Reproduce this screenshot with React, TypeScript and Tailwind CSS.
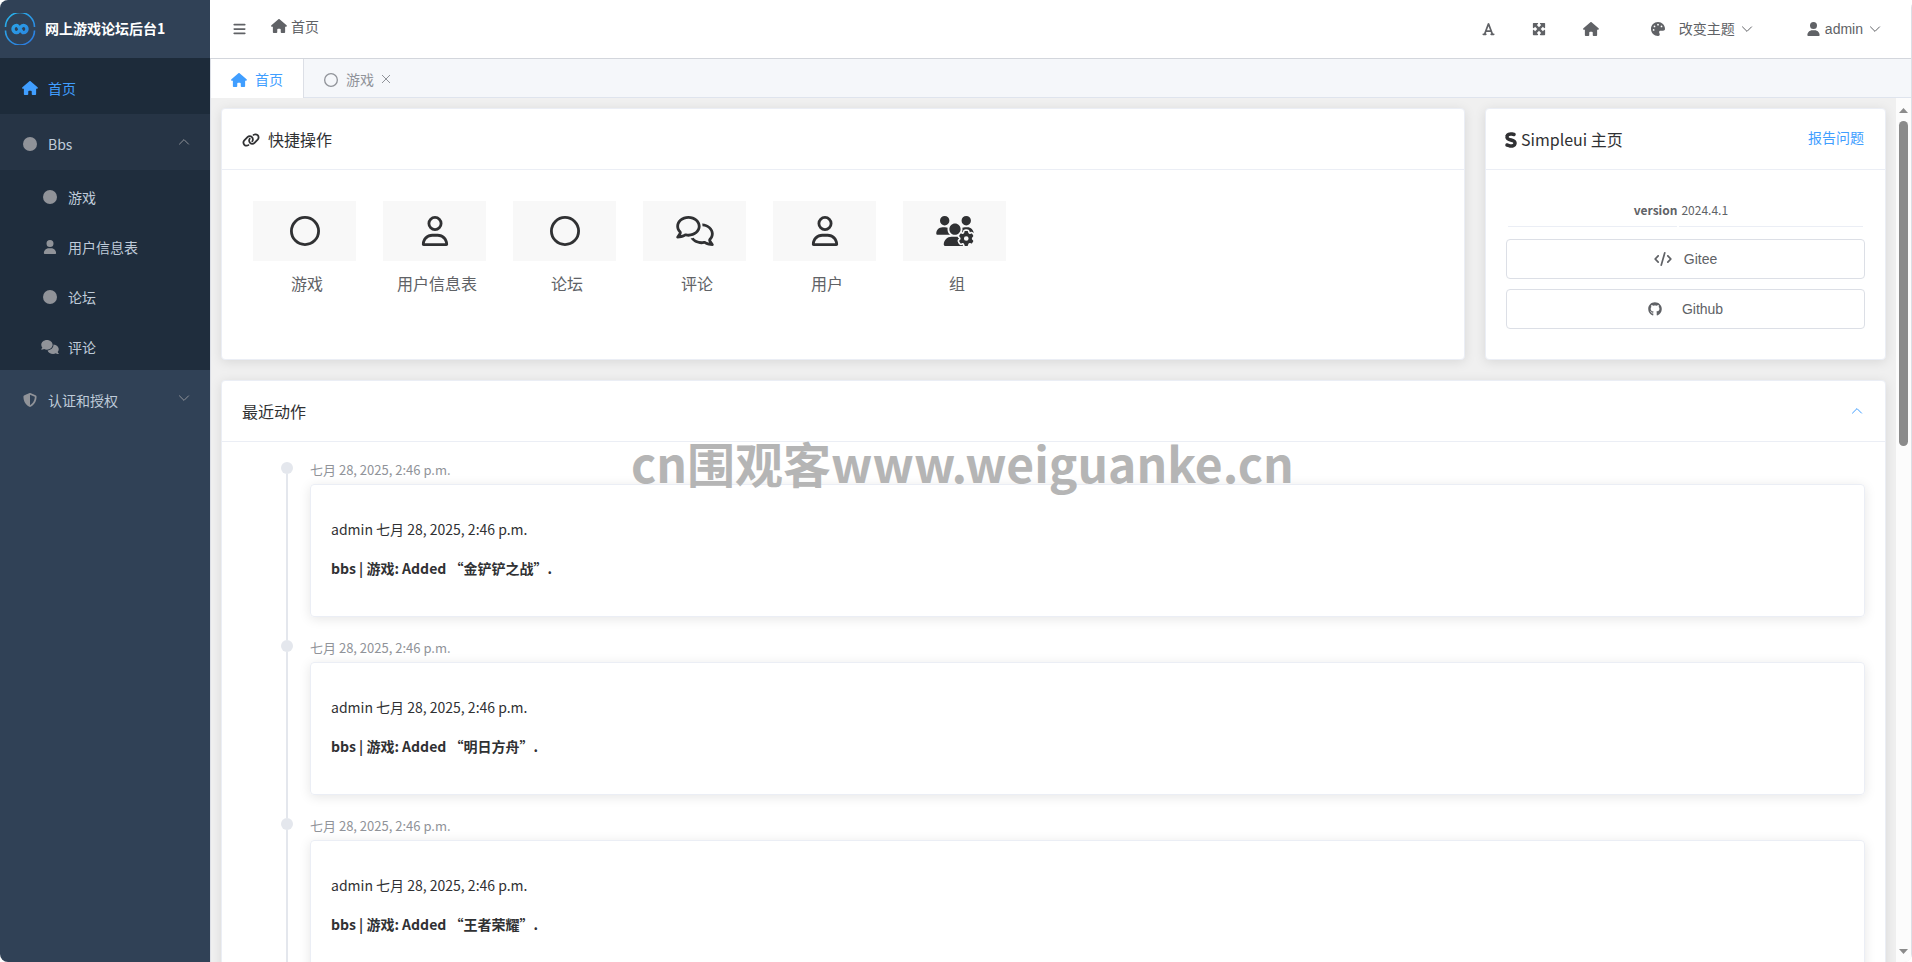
import type { ReactNode } from 'react';
import {
  FaBars,
  FaCircle,
  FaCode,
  FaComments,
  FaFont,
  FaGithub,
  FaHouse,
  FaLink,
  FaMaximize,
  FaPalette,
  FaRegCircle,
  FaRegComments,
  FaRegUser,
  FaS,
  FaShieldHalved,
  FaUser,
  FaUsersGear,
} from 'react-icons/fa6';

function Chevron({ up = false, className = '' }: { up?: boolean; className?: string }) {
  return (
    <svg width="12" height="12" viewBox="0 0 12 12" fill="none" stroke="currentColor" className={className} aria-hidden="true">
      <path d={up ? 'M1.2 8.4 6 3.6l4.8 4.8' : 'M1.2 3.6 6 8.4l4.8-4.8'} />
    </svg>
  );
}

function Logo() {
  return (
    <svg width="32" height="32" viewBox="0 0 32 32" fill="none" aria-hidden="true">
      <defs>
        <linearGradient id="ring" x1="4" y1="2" x2="26" y2="30" gradientUnits="userSpaceOnUse">
          <stop stopColor="#29b1ea" />
          <stop offset="1" stopColor="#2b7ce0" />
        </linearGradient>
      </defs>
      <g stroke="url(#ring)">
        <path d="M1.5 14A14.5 14.5 0 0 1 30.5 14" strokeWidth="1.6" />
        <path d="M30.5 17.5A14.5 14.5 0 0 1 1.5 17.5" strokeWidth="1.6" />
        <path
          d="M15.8 17C14.800 18.500 13.800 19.600 12.600 19.600a3.600 3.600 0 0 1 0-7.200C15 12.400 17 19.600 19.400 19.600a3.600 3.600 0 0 0 0-7.200c-1.200 0-2.200 1-3.200 2.600"
          strokeWidth="3.400"
        />
      </g>
    </svg>
  );
}

const subItems = [
  { label: '游戏', icon: <FaCircle /> },
  { label: '用户信息表', icon: <FaUser /> },
  { label: '论坛', icon: <FaCircle /> },
  { label: '评论', icon: <FaComments className="w-[18px]" /> },
];

function Sidebar() {
  return (
    <aside className="flex w-[210px] shrink-0 flex-col bg-[#304156] text-sm text-[#bfcbd9]">
      <div className="flex h-[58px] items-center gap-[9px] pl-1 font-bold text-white">
        <Logo />
        <span className="pb-[2px]">网上游戏论坛后台1</span>
      </div>
      <nav>
        <a href="#home" className="flex h-14 items-center gap-[6px] bg-[#1d2b3a] pt-1 pl-[18px] text-[#409eff]">
          <span className="flex w-6 justify-center">
            <FaHouse className="w-4" />
          </span>
          首页
        </a>
        <button type="button" className="flex h-14 w-full items-center bg-[#263445] pr-5 pl-[18px]">
          <span className="flex grow items-center gap-[6px] pt-1">
            <span className="flex w-6 justify-center text-[#909399]">
              <FaCircle />
            </span>
            Bbs
          </span>
          <Chevron up className="text-[#909399]" />
        </button>
        <ul className="bg-[#1f2d3d]">
          {subItems.map((item) => (
            <li key={item.label}>
              <a href="#list" className="flex h-[50px] items-center gap-[6px] pt-1 pl-[38px]">
                <span className="flex w-6 justify-center text-[#909399]">{item.icon}</span>
                {item.label}
              </a>
            </li>
          ))}
        </ul>
        <button type="button" className="flex h-14 w-full items-center pr-5 pl-[18px]">
          <span className="flex grow items-center gap-[6px] pt-1">
            <span className="flex w-6 justify-center text-[#909399]">
              <FaShieldHalved />
            </span>
            认证和授权
          </span>
          <Chevron className="text-[#909399]" />
        </button>
      </nav>
    </aside>
  );
}

function TopBar() {
  return (
    <header className="flex h-[59px] shrink-0 items-center justify-between border-b border-[#d3d6dc] bg-white pr-[30px] pl-[23px] text-sm text-[#606266]">
      <div className="flex items-center gap-[25px]">
        <button type="button" aria-label="菜单">
          <FaBars className="w-[13px]" />
        </button>
        <a href="#home" className="flex items-center gap-1 pb-[6px]">
          <FaHouse className="w-4" />
          首页
        </a>
      </div>
      <div className="flex items-center">
        <button type="button" aria-label="字体" className="mr-[37px]">
          <FaFont className="w-[13px]" />
        </button>
        <button type="button" aria-label="全屏" className="mr-[37px]">
          <FaMaximize />
        </button>
        <a href="#home" aria-label="首页" className="mr-[52px]">
          <FaHouse className="w-4" />
        </a>
        <button type="button" className="mr-[54px] flex items-center">
          <FaPalette className="mr-[14px]" />
          <span className="pb-[2px]">改变主题</span>
          <Chevron className="ml-[6px]" />
        </button>
        <button type="button" className="flex items-center font-['Liberation_Sans',sans-serif]">
          <FaUser className="mr-[5px] w-[13px]" />
          admin
          <Chevron className="ml-[6px]" />
        </button>
      </div>
    </header>
  );
}

function TabStrip() {
  return (
    <div className="flex h-[39px] shrink-0 border-l border-[#dcdfe6] bg-[#f5f7fa] text-sm text-[#909399]">
      <button type="button" className="flex items-center gap-2 border-r border-[#dcdfe6] bg-white px-5 text-[#409eff]">
        <FaHouse className="mt-[2px] w-4" />
        首页
      </button>
      <div className="flex grow items-center gap-2 border-b border-[#dfe4ed] pt-[2px] pl-5">
        <button type="button" className="flex items-center gap-2">
          <FaRegCircle className="mt-[2px]" />
          游戏
        </button>
        <button type="button" aria-label="关闭">
          <svg width="8" height="8" viewBox="0 0 8 8" stroke="currentColor" aria-hidden="true">
            <path d="m0 0 8 8M8 0 0 8" />
          </svg>
        </button>
      </div>
    </div>
  );
}

function Card({ title, extra, children, className = '' }: { title: ReactNode; extra?: ReactNode; children: ReactNode; className?: string }) {
  return (
    <section className={`rounded border border-[#ebeef5] bg-white shadow-[0_2px_12px_rgba(0,0,0,0.1)] ${className}`}>
      <div className="flex h-[61px] items-center justify-between border-b border-[#ebeef5] px-5 text-[#303133]">
        <h2 className="flex items-center text-base">{title}</h2>
        {extra}
      </div>
      {children}
    </section>
  );
}

const quickItems = [
  { label: '游戏', icon: <FaRegCircle /> },
  { label: '用户信息表', icon: <FaRegUser /> },
  { label: '论坛', icon: <FaRegCircle /> },
  { label: '评论', icon: <FaRegComments className="w-[38px]" /> },
  { label: '用户', icon: <FaRegUser /> },
  { label: '组', icon: <FaUsersGear className="w-[38px]" /> },
];

const actions = ['金铲铲之战', '明日方舟', '王者荣耀'];

function QuickCard() {
  return (
    <Card
      className="min-w-0 flex-1"
      title={
        <>
          <FaLink className="mt-[2px] mr-2 w-[18px]" />
          快捷操作
        </>
      }
    >
      <div className="flex flex-wrap gap-[22px] px-[31px] pt-[31px]">
        {quickItems.map((item) => (
          <a key={item.label} href="#open" className="w-[108px] text-center text-base text-[#606266]">
            <span className="flex h-[60px] w-[103px] items-center justify-center bg-[#f8f8f8] text-3xl text-[#303133]">{item.icon}</span>
            <span className="mt-[10px] block">{item.label}</span>
          </a>
        ))}
      </div>
    </Card>
  );
}

function HomeCard() {
  return (
    <Card
      className="w-[401px] shrink-0"
      title={
        <>
          <FaS className="mt-[2px] mr-[5px] w-[10px] overflow-visible stroke-current stroke-[48]" />
          Simpleui 主页
        </>
      }
      extra={
        <a href="#report" className="pr-px pb-[5px] text-sm text-[#409eff]">
          报告问题
        </a>
      }
    >
      <div className="px-5 pt-[21px] pb-[30px] text-[#606266]">
        <table className="w-full border-separate border-spacing-[2px] text-xs leading-[18px]">
          <tbody>
            <tr>
              <th scope="row" className="w-[48%] border-b border-[#ebeef5] pt-2 pb-[7px] text-right font-bold">
                version
              </th>
              <td className="border-b border-[#ebeef5] pt-2 pb-[7px] pl-[2px]">2024.4.1</td>
            </tr>
          </tbody>
        </table>
        <div className="mt-[10px] flex flex-col gap-[10px] font-['Liberation_Sans',sans-serif] text-sm">
          <button type="button" className="flex h-10 items-center justify-center gap-3 rounded border border-[#dcdfe6]">
            <FaCode className="w-[18px]" />
            Gitee
          </button>
          <button type="button" className="flex h-10 items-center justify-center gap-5 rounded border border-[#dcdfe6]">
            <FaGithub />
            Github
          </button>
        </div>
      </div>
    </Card>
  );
}

function ActivityCard() {
  return (
    <Card
      title="最近动作"
      extra={
        <button type="button" aria-label="收起" className="mr-[2px] text-[#409eff]">
          <Chevron up />
        </button>
      }
    >
      <ol className="pt-5 pr-5 pl-[59px]">
        {actions.map((name) => (
          <li key={name} className="flex gap-[17px]">
            <div className="flex w-3 flex-col items-center">
              <span className="size-3 shrink-0 rounded-full bg-[#e4e7ed]" />
              <span className="w-[2px] grow bg-[#e4e7ed]" />
            </div>
            <div className="min-w-0 grow pb-[23px]">
              <time className="block pb-[6px] text-[13px] leading-4 text-[#909399]">七月 28, 2025, 2:46 p.m.</time>
              <div className="rounded border border-[#ebeef5] px-5 pt-[34px] pb-[38px] text-sm text-[#303133] shadow-[0_2px_12px_rgba(0,0,0,0.1)]">
                <p>admin 七月 28, 2025, 2:46 p.m.</p>
                <p className="mt-[19px] font-bold">bbs | 游戏: Added “{name}”.</p>
              </div>
            </div>
          </li>
        ))}
      </ol>
    </Card>
  );
}

function ScrollTrack() {
  return (
    <div className="flex w-[15px] shrink-0 flex-col items-center bg-[#fcfcfc] pt-[10px] pb-2 text-[#8b8b8b]" aria-hidden="true">
      <svg width="9" height="5" viewBox="0 0 9 5" fill="currentColor">
        <path d="M4.5 0 9 5H0Z" />
      </svg>
      <div className="mt-2 h-5/13 w-[9px] rounded-full bg-[#8b8b8b]" />
      <svg width="9" height="5" viewBox="0 0 9 5" fill="currentColor" className="mt-auto">
        <path d="M0 0h9L4.5 5Z" />
      </svg>
    </div>
  );
}

export default function App() {
  return (
    <div className="relative flex h-screen overflow-hidden rounded-lg bg-white font-['Noto_Sans_CJK_SC',sans-serif]">
      <Sidebar />
      <div className="flex min-w-0 grow flex-col border-r border-[#dcdfe6]">
        <TopBar />
        <TabStrip />
        <div className="flex min-h-0 grow border-l border-[#dcdfe6] bg-[#f0f0f0]">
          <main className="min-w-0 grow overflow-hidden p-[10px]">
            <div className="mb-5 flex gap-5">
              <QuickCard />
              <HomeCard />
            </div>
            <ActivityCard />
          </main>
          <ScrollTrack />
        </div>
      </div>
      <p className="pointer-events-none absolute top-[438px] left-[631px] text-5xl leading-[48px] font-bold whitespace-nowrap text-[#b5b5b5]">
        cn围观客www.weiguanke.cn
      </p>
    </div>
  );
}
